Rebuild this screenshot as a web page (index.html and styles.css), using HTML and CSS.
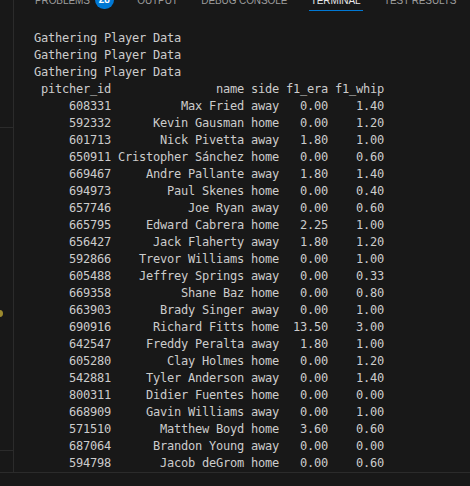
FILE: index.html
```html
<!DOCTYPE html>
<html lang="en">
<head>
<meta charset="utf-8">
<title>Terminal</title>
<link rel="stylesheet" href="styles.css">
</head>
<body>
<div class="app">
  <div class="workspace">
    <div class="side">
      <div class="side-top"></div>
      <div class="side-mid"></div>
      <div class="side-rest"></div>
      <span class="dot"></span>
    </div>
    <div class="panel">
      <div class="tabs">
        <div class="tab"><span class="label">Problems</span><span class="badge">28</span></div>
        <div class="tab"><span class="label">Output</span></div>
        <div class="tab"><span class="label">Debug Console</span></div>
        <div class="tab active"><span class="label">Terminal</span></div>
        <div class="tab"><span class="label">Test Results</span></div>
      </div>
      <pre class="term">Gathering Player Data
Gathering Player Data
Gathering Player Data
 pitcher_id               name side f1_era f1_whip
     608331          Max Fried away   0.00    1.40
     592332      Kevin Gausman home   0.00    1.20
     601713       Nick Pivetta away   1.80    1.00
     650911 Cristopher Sánchez home   0.00    0.60
     669467     Andre Pallante away   1.80    1.40
     694973        Paul Skenes home   0.00    0.40
     657746           Joe Ryan away   0.00    0.60
     665795     Edward Cabrera home   2.25    1.00
     656427      Jack Flaherty away   1.80    1.20
     592866    Trevor Williams home   0.00    1.00
     605488    Jeffrey Springs away   0.00    0.33
     669358          Shane Baz home   0.00    0.80
     663903       Brady Singer away   0.00    1.00
     690916      Richard Fitts home  13.50    3.00
     642547     Freddy Peralta away   1.80    1.00
     605280        Clay Holmes home   0.00    1.20
     542881     Tyler Anderson away   0.00    1.40
     800311     Didier Fuentes home   0.00    0.00
     668909     Gavin Williams away   0.00    1.00
     571510       Matthew Boyd home   3.60    0.60
     687064      Brandon Young away   0.00    0.00
     594798       Jacob deGrom home   0.00    0.60</pre>
    </div>
  </div>
  <div class="footer"></div>
</div>
</body>
</html>
```

FILE: styles.css
```css
html, body {
  margin: 0;
  padding: 0;
}

body {
  background: #181818;
  width: 470px;
  height: 486px;
  overflow: hidden;
}

.app {
  display: flex;
  flex-direction: column;
  height: 486px;
}

.workspace {
  display: flex;
  height: 473px;
  box-sizing: border-box;
  border-bottom: 1px solid #2b2b2b;
}

.side {
  position: relative;
  width: 14px;
  box-sizing: border-box;
  border-right: 1px solid #2b2b2b;
  display: flex;
  flex-direction: column;
  flex: none;
}

.side-top {
  height: 128px;
  box-sizing: border-box;
  border-bottom: 1px solid #2b2b2b;
}

.side-mid {
  height: 323px;
  box-sizing: border-box;
  border-bottom: 1px solid #2b2b2b;
}

.side-rest {
  flex: 1;
}

.dot {
  position: absolute;
  left: -4px;
  top: 310px;
  width: 7px;
  height: 7px;
  border-radius: 50%;
  background: #9c8a2e;
}

.panel {
  flex: 1;
  display: flex;
  flex-direction: column;
  min-width: 0;
}

.tabs {
  display: flex;
  align-items: flex-end;
  gap: 19.5px;
  margin-top: -7px;
  padding-left: 19px;
  font-family: "Liberation Sans", Arial, sans-serif;
  font-size: 10px;
  letter-spacing: -0.1px;
  line-height: 16px;
  text-transform: uppercase;
  color: #9d9d9d;
  white-space: nowrap;
  overflow: hidden;
}

.tab {
  display: flex;
  align-items: center;
  gap: 5px;
  padding: 0 2px 1px;
  border-bottom: 1px solid transparent;
}

.tab.active {
  color: #e7e7e7;
  border-bottom-color: #0078d4;
}

.badge {
  display: inline-flex;
  align-items: center;
  justify-content: center;
  min-width: 19px;
  height: 18px;
  border-radius: 9px;
  background: #0078d4;
  color: #ffffff;
  font-size: 10px;
  font-weight: 600;
  letter-spacing: 0;
  margin-top: -2px;
}

.term {
  margin: 19px 0 0;
  padding-left: 20px;
  font-family: "DejaVu Sans Mono", "Liberation Mono", monospace;
  font-size: 12px;
  letter-spacing: -0.224px;
  line-height: 17px;
  color: #cccccc;
}

.footer {
  flex: 1;
}
```
